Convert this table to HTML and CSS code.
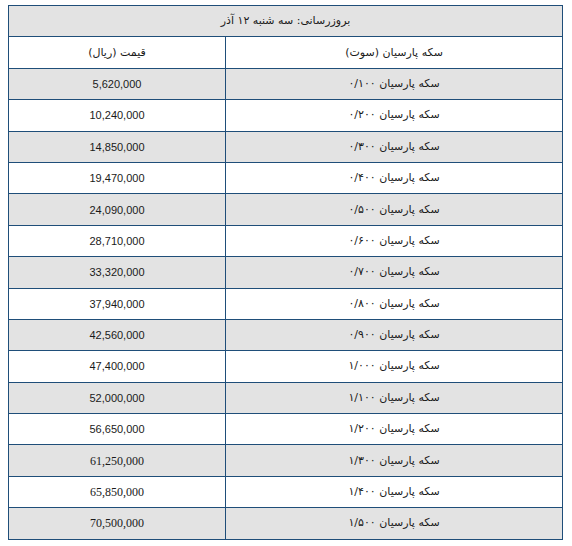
FILE: index.html
```html
<!DOCTYPE html>
<html lang="fa" dir="rtl">
<head>
<meta charset="utf-8">
<title>قیمت سکه پارسیان</title>
<link rel="stylesheet" href="styles.css">
</head>
<body>
<table class="prices">
  <colgroup><col class="col-name"><col class="col-price"></colgroup>
  <tr class="odd"><td class="title" colspan="2">بروزرسانی: سه شنبه ۱۲ آذر</td></tr>
  <tr><td class="name">سکه پارسیان (سوت)</td><td class="price fa">قیمت (ریال)</td></tr>
  <tr class="odd"><td class="name">سکه پارسیان ۰/۱۰۰</td><td class="price">5,620,000</td></tr>
  <tr><td class="name">سکه پارسیان ۰/۲۰۰</td><td class="price">10,240,000</td></tr>
  <tr class="odd"><td class="name">سکه پارسیان ۰/۳۰۰</td><td class="price">14,850,000</td></tr>
  <tr><td class="name">سکه پارسیان ۰/۴۰۰</td><td class="price">19,470,000</td></tr>
  <tr class="odd"><td class="name">سکه پارسیان ۰/۵۰۰</td><td class="price">24,090,000</td></tr>
  <tr><td class="name">سکه پارسیان ۰/۶۰۰</td><td class="price">28,710,000</td></tr>
  <tr class="odd"><td class="name">سکه پارسیان ۰/۷۰۰</td><td class="price">33,320,000</td></tr>
  <tr><td class="name">سکه پارسیان ۰/۸۰۰</td><td class="price">37,940,000</td></tr>
  <tr class="odd"><td class="name">سکه پارسیان ۰/۹۰۰</td><td class="price">42,560,000</td></tr>
  <tr><td class="name">سکه پارسیان ۱/۰۰۰</td><td class="price">47,400,000</td></tr>
  <tr class="odd"><td class="name">سکه پارسیان ۱/۱۰۰</td><td class="price">52,000,000</td></tr>
  <tr><td class="name">سکه پارسیان ۱/۲۰۰</td><td class="price">56,650,000</td></tr>
  <tr class="odd"><td class="name">سکه پارسیان ۱/۳۰۰</td><td class="price serif">61,250,000</td></tr>
  <tr><td class="name">سکه پارسیان ۱/۴۰۰</td><td class="price serif">65,850,000</td></tr>
  <tr class="odd"><td class="name">سکه پارسیان ۱/۵۰۰</td><td class="price serif">70,500,000</td></tr>
</table>
</body>
</html>
```
FILE: styles.css
```css
html, body {
  margin: 0;
  padding: 0;
  background: #ffffff;
}
body {
  padding: 5px 9px 0 10px;
  font-family: "DejaVu Sans", sans-serif;
  color: #1a1a1a;
}
.prices {
  width: 554px;
  border-collapse: collapse;
  border: 1px solid #1f4e79;
  table-layout: fixed;
}
.col-name {
  width: 337px;
}
.col-price {
  width: 217px;
}
.prices tr {
  height: 31.4px;
}
.prices td {
  border: 1px solid #1f4e79;
  text-align: center;
  vertical-align: middle;
  padding: 0 6px;
  font-size: 11px;
  line-height: 14px;
}
.prices tr.odd td {
  background: #e3e3e3;
}
.price {
  font-family: "Liberation Sans", sans-serif;
  font-size: 12px;
}
.price.fa {
  font-family: "DejaVu Sans", sans-serif;
  font-size: 11px;
}
.price.serif {
  font-family: "Liberation Serif", serif;
  font-size: 12px;
}
```
